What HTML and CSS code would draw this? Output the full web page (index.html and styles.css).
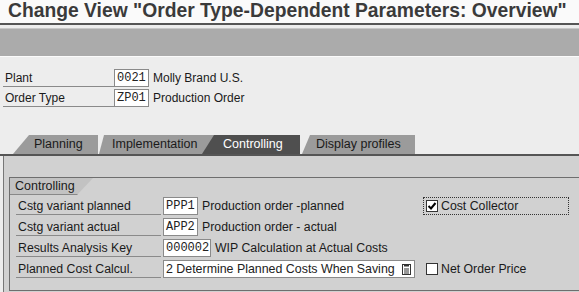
FILE: index.html
```html
<!DOCTYPE html>
<html>
<head>
<meta charset="utf-8">
<link rel="stylesheet" href="styles.css">
</head>
<body>
<div class="title">Change View "Order Type-Dependent Parameters: Overview"</div>
<div class="toolbar"></div>
<div class="header">
  <div class="frow"><span class="lbl">Plant</span><span class="inp">0021</span><span class="desc">Molly Brand U.S.</span></div>
  <div class="frow"><span class="lbl">Order Type</span><span class="inp">ZP01</span><span class="desc">Production Order</span></div>
</div>
<div class="tabs">
  <div class="tab t1">Planning</div>
  <div class="tab t2">Implementation</div>
  <div class="tab t3 active">Controlling</div>
  <div class="tab t4">Display profiles</div>
</div>
<div class="panel">
  <div class="group">
    <div class="gtitle">Controlling</div>
    <div class="grows">
      <div class="grow">
        <span class="glbl">Cstg variant planned</span><span class="inp i4">PPP1</span><span class="desc">Production order -planned</span>
        <span class="check focus"><span class="box"><svg width="10" height="10" viewBox="0 0 10 10"><path d="M1.5 5 L4 7.5 L8.5 2" fill="none" stroke="#000" stroke-width="2"/></svg></span>Cost Collector</span>
      </div>
      <div class="grow">
        <span class="glbl">Cstg variant actual</span><span class="inp i4">APP2</span><span class="desc">Production order - actual</span>
      </div>
      <div class="grow">
        <span class="glbl">Results Analysis Key</span><span class="inp i6">000002</span><span class="desc">WIP Calculation at Actual Costs</span>
      </div>
      <div class="grow">
        <span class="glbl">Planned Cost Calcul.</span><span class="inp dd">2 Determine Planned Costs When Saving<svg class="ddicon" width="9" height="11" viewBox="0 0 9 11"><rect x="0.5" y="0.5" width="8" height="10" fill="#fff" stroke="#333"/><rect x="2" y="0.5" width="5" height="2" fill="#333"/><path d="M2 5h5M2 7h5M2 9h5" stroke="#333" stroke-width="1"/></svg></span>
        <span class="check"><span class="box"></span>Net Order Price</span>
      </div>
    </div>
  </div>
</div>
</body>
</html>
```

FILE: styles.css
```css
html, body {
  margin: 0;
  padding: 0;
}
body {
  width: 579px;
  height: 292px;
  overflow: hidden;
  background: #ededed;
  font-family: "Liberation Sans", Arial, sans-serif;
  font-size: 12px;
  color: #1a1a1a;
}
.title {
  height: 23px;
  padding-left: 8px;
  font-weight: bold;
  font-size: 19.3px;
  line-height: 22px;
  color: #3a3a3a;
  background: #fafafa;
  border-bottom: 2px solid #555;
  white-space: nowrap;
}
.toolbar {
  margin-top: 3px;
  height: 27px;
  background: #ababab;
  border-top: 1px solid #c8c8c8;
  border-bottom: 1px solid #fbfbfb;
}
.header {
  padding: 12px 0 0 3px;
  display: flex;
  flex-direction: column;
  gap: 2px;
}
.frow {
  display: flex;
  align-items: center;
  height: 18px;
}
.lbl {
  width: 111px;
  height: 18px;
  line-height: 18px;
  padding-left: 2px;
  border-bottom: 1px solid #8a8a8a;
  box-sizing: border-box;
}
.inp {
  height: 18px;
  box-sizing: border-box;
  border: 1px solid #8a8a8a;
  background: #fff;
  font-family: "Liberation Mono", "Courier New", monospace;
  font-size: 12px;
  line-height: 16px;
  padding: 0 2px;
  color: #222;
}
.frow .inp {
  width: 35px;
}
.desc {
  margin-left: 4px;
  white-space: nowrap;
}
.tabs {
  margin-top: 28px;
  height: 19px;
  display: flex;
  padding-left: 13px;
  border-bottom: 2px solid #555;
}
.tab {
  height: 19px;
  box-sizing: border-box;
  background: #9b9b9b;
  color: #1a1a1a;
  line-height: 19px;
  font-size: 12.5px;
  clip-path: polygon(12px 0, 100% 0, 100% 100%, 0 100%);
}
.t1 {
  width: 85px;
  padding-left: 21px;
  clip-path: polygon(16px 0, 100% 0, 100% 100%, 0 100%);
}
.t2 {
  width: 115px;
  margin-left: 1px;
  padding-left: 13px;
  clip-path: polygon(5px 0, 100% 0, 100% 100%, 0 100%);
}
.t3 {
  width: 98px;
  margin-left: -12px;
  padding-left: 21px;
  background: #4f4f4f;
  color: #fff;
}
.t4 {
  width: 113px;
  margin-left: 2px;
  padding-left: 14px;
  clip-path: polygon(8px 0, 100% 0, 100% 100%, 0 100%);
}
.panel {
  margin-left: 3px;
  height: 140px;
  background: #d1d1d1;
  border-left: 1px solid #777;
  padding: 21px 0 0 5px;
  box-sizing: border-box;
  font-size: 12.3px;
}
.group {
  border-top: 1px solid #6e6e6e;
  border-left: 1px solid #6e6e6e;
  border-bottom: 1px solid #6e6e6e;
  height: 114px;
  box-sizing: border-box;
}
.gtitle {
  width: 83px;
  height: 17px;
  line-height: 16px;
  padding-left: 5px;
  box-sizing: border-box;
  background: #c2c2c2;
  border-bottom: 1px solid #888;
  clip-path: polygon(0 0, 100% 0, 67px 100%, 0 100%);
  font-size: 12.5px;
}
.grows {
  padding: 2px 0 0 6px;
  display: flex;
  flex-direction: column;
  gap: 3px;
}
.grow {
  display: flex;
  align-items: center;
  height: 18px;
}
.glbl {
  width: 145px;
  height: 18px;
  line-height: 18px;
  padding-left: 2px;
  border-bottom: 1px solid #8a8a8a;
  box-sizing: border-box;
  margin-right: 2px;
}
.i4 { width: 35px; }
.i6 { width: 48px; }
.dd {
  width: 252px;
  font-family: "Liberation Sans", Arial, sans-serif;
  font-size: 12.4px;
  display: flex;
  align-items: center;
  justify-content: space-between;
  padding-right: 3px;
}
.ddicon {
  flex: none;
}
.check {
  display: flex;
  align-items: center;
  height: 18px;
  box-sizing: border-box;
  padding-left: 3px;
  white-space: nowrap;
}
.grow:first-child .check {
  margin-left: auto;
  margin-right: 10px;
  width: 146px;
  border: 1px dotted #333;
  padding-left: 2px;
}
.grow:last-child .check {
  margin-left: 8px;
}
.box {
  width: 12px;
  height: 12px;
  box-sizing: border-box;
  border: 1px solid #333;
  background: #fff;
  margin-right: 3px;
  display: flex;
  align-items: center;
  justify-content: center;
}
```
